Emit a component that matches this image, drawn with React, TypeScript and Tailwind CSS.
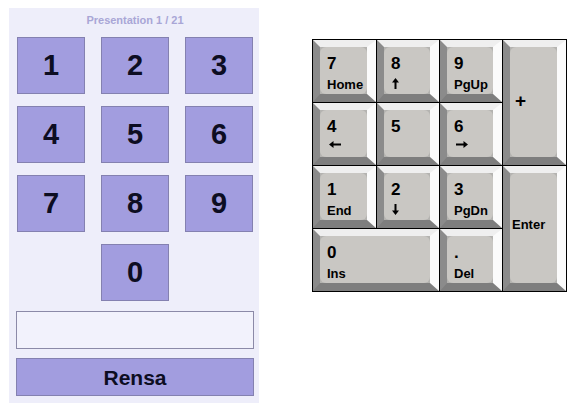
import React from "react";

type KeyProps = {
  main?: string;
  sub?: React.ReactNode;
  className?: string;
  kind?: "normal" | "plus" | "enter";
};

const Up = () => (
  <svg width="7" height="11" viewBox="0 0 7 11" className="block mt-[0px] ml-[1px]">
    <polygon points="3.5,0 7,4.5 4.5,4.5 4.5,11 2.5,11 2.5,4.5 0,4.5" fill="#000" />
  </svg>
);
const Down = () => (
  <svg width="7" height="11" viewBox="0 0 7 11" className="block mt-[0px] ml-[1px]">
    <polygon points="3.5,11 7,6.5 4.5,6.5 4.5,0 2.5,0 2.5,6.5 0,6.5" fill="#000" />
  </svg>
);
const Left = () => (
  <svg width="12" height="7" viewBox="0 0 12 7" className="block mt-[3px] ml-[2px]">
    <polygon points="0,3.5 4.5,0 4.5,2.5 12,2.5 12,4.5 4.5,4.5 4.5,7" fill="#000" />
  </svg>
);
const Right = () => (
  <svg width="12" height="7" viewBox="0 0 12 7" className="block mt-[3px] ml-[2px]">
    <polygon points="12,3.5 7.5,0 7.5,2.5 0,2.5 0,4.5 7.5,4.5 7.5,7" fill="#000" />
  </svg>
);

function Key({ main, sub, className = "", kind = "normal" }: KeyProps) {
  return (
    <div
      className={
        "border-t-[7px] border-l-[7px] border-r-[9px] border-b-[8px] border-t-[#efefef] border-l-[#8b8b8b] border-r-[#fbfbfb] border-b-[#7e7e7e] bg-[#b4b3b0] " +
        className
      }
    >
      {kind === "normal" && (
        <div className="h-full rounded-[6px] bg-[#c9c7c3] pl-[7px] pt-[8px] text-black font-bold">
          <div className="text-[17px] leading-[17px]">{main}</div>
          {sub && <div className="mt-[6px] h-[13px] text-[13px] leading-[13px]">{sub}</div>}
        </div>
      )}
      {kind === "plus" && (
        <div className="h-full rounded-[6px] bg-[#c9c7c3] pl-[5px] pb-[4px] flex items-center text-black font-bold text-[19px] leading-[19px]">
          +
        </div>
      )}
      {kind === "enter" && (
        <div className="h-full rounded-[6px] bg-[#c9c7c3] pl-[2px] pb-[8px] flex items-center text-black font-bold text-[13px] leading-[13px]">
          Enter
        </div>
      )}
    </div>
  );
}

const btn =
  "flex items-center justify-center bg-[#a29ddf] border border-[#8481b0] text-[#0d0d22] font-bold text-[29px] leading-none";

export default function App() {
  return (
    <div
      className="flex w-[582px] h-[411px] bg-white overflow-hidden"
      style={{ fontFamily: '"Liberation Sans", Arial, sans-serif' }}
    >
      <div className="ml-[9px] mt-[8px] w-[250px] h-[395px] bg-[#eeeefa] pl-[8px] flex flex-col">
        <div className="h-[29px] pt-[5px] w-[236px] text-center text-[11px] leading-[14px] font-bold text-[#a9a6d6]">
          Presentation 1 / 21
        </div>
        <div className="grid grid-cols-[68px_68px_68px] auto-rows-[57px] gap-x-[16px] gap-y-[12px]">
          {["1", "2", "3", "4", "5", "6", "7", "8", "9"].map((d) => (
            <div key={d} className={btn}>
              {d}
            </div>
          ))}
          <div className={btn + " col-start-2"}>0</div>
        </div>
        <div className="mt-[10px] -ml-px w-[238px] h-[38px] border border-[#8c8aa8] bg-[#f2f2fc]" />
        <div className="mt-[9px] -ml-px w-[238px] h-[38px] flex items-center justify-center bg-[#a29ddf] border border-[#8481b0] text-[#0d0d22] font-bold text-[21px] leading-none">
          Rensa
        </div>
      </div>

      <div className="ml-[53px] mt-[39px] self-start">
        <div className="grid grid-cols-[63px_62px_62px_63px] grid-rows-[62px_62px_62px_62px] gap-px bg-black p-px">
          <Key main="7" sub="Home" />
          <Key main="8" sub={<Up />} />
          <Key main="9" sub="PgUp" />
          <Key kind="plus" className="row-span-2" />
          <Key main="4" sub={<Left />} />
          <Key main="5" />
          <Key main="6" sub={<Right />} />
          <Key main="1" sub="End" />
          <Key main="2" sub={<Down />} />
          <Key main="3" sub="PgDn" />
          <Key kind="enter" className="row-span-2" />
          <Key main="0" sub="Ins" className="col-span-2" />
          <Key main="." sub="Del" />
        </div>
      </div>
    </div>
  );
}
